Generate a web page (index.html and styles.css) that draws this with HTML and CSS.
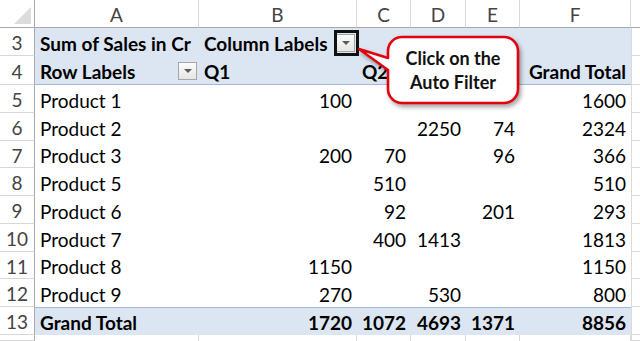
FILE: index.html
```html
<!DOCTYPE html>
<html lang="en">
<head>
  <meta charset="UTF-8">
  <title>Pivot Table - Auto Filter</title>
  <link rel="stylesheet" href="styles.css">
</head>
<body>

  <div class="sheet">
    <div class="grid">
      <!-- column letters -->
      <div class="corner"><span class="corner-mark"></span></div>
      <div class="colhead">A</div>
      <div class="colhead">B</div>
      <div class="colhead">C</div>
      <div class="colhead">D</div>
      <div class="colhead">E</div>
      <div class="colhead">F</div>
      <div class="colhead last"></div>

      <!-- row 3 -->
      <div class="rowhead">3</div>
      <div class="cell band bold">Sum of Sales in Cr</div>
      <div class="cell band bold">Column Labels<span class="dropdown"></span></div>
      <div class="cell band"></div>
      <div class="cell band"></div>
      <div class="cell band"></div>
      <div class="cell band"></div>
      <div class="cell out"></div>

      <!-- row 4 -->
      <div class="rowhead">4</div>
      <div class="cell band head bold">Row Labels<span class="dropdown"></span></div>
      <div class="cell band head bold">Q1</div>
      <div class="cell band head bold">Q2</div>
      <div class="cell band head bold"></div>
      <div class="cell band head bold"></div>
      <div class="cell band head bold num">Grand Total</div>
      <div class="cell out"></div>

      <div class="rowhead">5</div>
      <div class="cell">Product 1</div>
      <div class="cell num">100</div>
      <div class="cell num"></div>
      <div class="cell num"></div>
      <div class="cell num"></div>
      <div class="cell num">1600</div>
      <div class="cell out"></div>

      <div class="rowhead">6</div>
      <div class="cell">Product 2</div>
      <div class="cell num"></div>
      <div class="cell num"></div>
      <div class="cell num">2250</div>
      <div class="cell num">74</div>
      <div class="cell num">2324</div>
      <div class="cell out"></div>

      <div class="rowhead">7</div>
      <div class="cell">Product 3</div>
      <div class="cell num">200</div>
      <div class="cell num">70</div>
      <div class="cell num"></div>
      <div class="cell num">96</div>
      <div class="cell num">366</div>
      <div class="cell out"></div>

      <div class="rowhead">8</div>
      <div class="cell">Product 5</div>
      <div class="cell num"></div>
      <div class="cell num">510</div>
      <div class="cell num"></div>
      <div class="cell num"></div>
      <div class="cell num">510</div>
      <div class="cell out"></div>

      <div class="rowhead">9</div>
      <div class="cell">Product 6</div>
      <div class="cell num"></div>
      <div class="cell num">92</div>
      <div class="cell num"></div>
      <div class="cell num">201</div>
      <div class="cell num">293</div>
      <div class="cell out"></div>

      <div class="rowhead">10</div>
      <div class="cell">Product 7</div>
      <div class="cell num"></div>
      <div class="cell num">400</div>
      <div class="cell num">1413</div>
      <div class="cell num"></div>
      <div class="cell num">1813</div>
      <div class="cell out"></div>

      <div class="rowhead">11</div>
      <div class="cell">Product 8</div>
      <div class="cell num">1150</div>
      <div class="cell num"></div>
      <div class="cell num"></div>
      <div class="cell num"></div>
      <div class="cell num">1150</div>
      <div class="cell out"></div>

      <div class="rowhead">12</div>
      <div class="cell">Product 9</div>
      <div class="cell num">270</div>
      <div class="cell num"></div>
      <div class="cell num">530</div>
      <div class="cell num"></div>
      <div class="cell num">800</div>
      <div class="cell out"></div>

      <!-- totals -->
      <div class="rowhead">13</div>
      <div class="cell band total bold">Grand Total</div>
      <div class="cell band total bold num">1720</div>
      <div class="cell band total bold num">1072</div>
      <div class="cell band total bold num">4693</div>
      <div class="cell band total bold num">1371</div>
      <div class="cell band total bold num">8856</div>
      <div class="cell out"></div>

      <!-- row 14, cut off -->
      <div class="rowhead"></div>
      <div class="cell plain"></div>
      <div class="cell plain"></div>
      <div class="cell plain"></div>
      <div class="cell plain"></div>
      <div class="cell plain"></div>
      <div class="cell plain"></div>
      <div class="cell out"></div>
    </div>

    <!-- selection frame round the filter button -->
    <div class="focus-box"></div>

    <!-- callout bubble -->
    <div class="callout">
      <svg class="callout-shape" width="168" height="76" viewBox="0 0 168 76">
        <path d="M46,3 H148 A14,14 0 0 1 162,17 V55 A14,14 0 0 1 148,69 H46 A14,14 0 0 1 32,55 V36 L3,15 L32,24 V17 A14,14 0 0 1 46,3 Z"
              fill="#fff" stroke="#e3000f" stroke-width="2.6" stroke-linejoin="round"/>
      </svg>
      <div class="callout-text">Click on the<br>Auto Filter</div>
    </div>
  </div>

</body>
</html>
```

FILE: styles.css
```css
* {
  box-sizing: border-box;
}

body {
  margin: 0;
  background: #fff;
  font-family: Lato, "Liberation Sans", sans-serif;
  font-size: 19px;
  color: #000;
}

.sheet {
  position: relative;
  width: 640px;
  height: 341px;
  overflow: hidden;
}

.grid {
  display: grid;
  grid-template-columns: 35px 164px 158px 54px 55px 54px 111px 1fr;
  grid-template-rows: 28px 28px 29px 28px 28px 27px 28px 28px 28px 27px 28px 28px 6px;
}

.corner {
  position: relative;
  border-right: 1px solid #a9a9a9;
  border-bottom: 1px solid #a9a9a9;
}

.corner-mark {
  position: absolute;
  right: 3px;
  bottom: 3px;
  width: 0;
  height: 0;
  border-left: 17px solid transparent;
  border-bottom: 17px solid #dcdcdc;
}

.colhead {
  display: flex;
  align-items: center;
  justify-content: center;
  color: #444;
  border-right: 1px solid #dadada;
  border-bottom: 1px solid #a9a9a9;
  padding-top: 1px;
}

.colhead.last {
  border-right: none;
}

.rowhead {
  display: flex;
  align-items: center;
  justify-content: center;
  color: #444;
  border-right: 1px solid #a9a9a9;
  border-bottom: 1px solid #d8d8d8;
  padding-top: 2px;
}

.cell {
  display: flex;
  align-items: center;
  padding: 2px 5px 0 5px;
  white-space: nowrap;
  overflow: hidden;
}

.cell.num {
  justify-content: flex-end;
}

.cell.bold {
  font-weight: 700;
}

.cell.band {
  background: #dce6f2;
}

.cell.head {
  border-bottom: 1px solid #9dbbe0;
}

.cell.total {
  border-top: 1px solid #9dbbe0;
}

.cell.plain {
  border-right: 1px solid #dadada;
}

.cell.out {
  border-left: 1px solid #dadada;
  border-bottom: 1px solid #dadada;
}

/* small filter button inside a header cell */
.dropdown {
  position: relative;
  flex: none;
  width: 19px;
  height: 18px;
  margin-left: auto;
  margin-right: -3px;
  border: 1px solid #a6a6a6;
  background: linear-gradient(#fbfbfb, #e6e6e6);
}

.dropdown::after {
  content: "";
  position: absolute;
  left: 5px;
  top: 6px;
  border-left: 4px solid transparent;
  border-right: 4px solid transparent;
  border-top: 4px solid #5a5a5a;
}

.focus-box {
  position: absolute;
  left: 334px;
  top: 30px;
  width: 25px;
  height: 26px;
  border: 3px solid #111;
}

.callout {
  position: absolute;
  left: 356px;
  top: 34px;
  width: 168px;
  height: 76px;
}

.callout-shape {
  position: absolute;
  left: 0;
  top: 0;
  filter: drop-shadow(2px 3px 2px rgba(0, 0, 0, 0.35));
}

.callout-text {
  position: absolute;
  left: 32px;
  top: 3px;
  width: 130px;
  height: 66px;
  display: flex;
  align-items: center;
  justify-content: center;
  text-align: center;
  font-weight: 700;
  font-size: 18px;
  line-height: 24px;
  color: #111;
}
```
